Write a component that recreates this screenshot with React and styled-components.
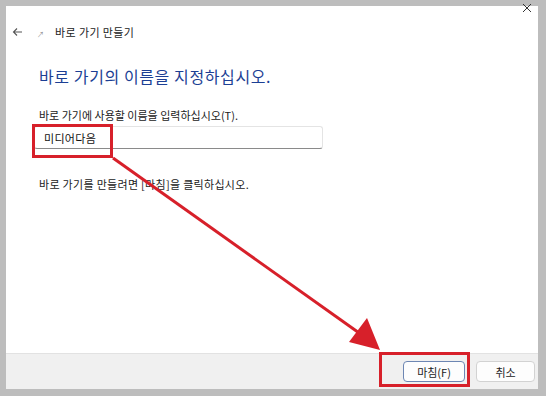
import React from 'react';
import styled, { createGlobalStyle } from 'styled-components';

const GlobalStyle = createGlobalStyle`
  html, body {
    margin: 0;
    padding: 0;
    background: #bdbdbd;
  }
  * {
    box-sizing: border-box;
  }
`;

const KR = `"Noto Sans CJK KR", "Noto Sans", sans-serif`;

// outer gray frame around the captured dialog
const Frame = styled.div`
  position: relative;
  width: 546px;
  height: 396px;
  padding: 6px 8px 7px 6px;
  background: #bdbdbd;
  font-family: ${KR};
`;

const Dialog = styled.div`
  width: 100%;
  height: 100%;
  display: flex;
  flex-direction: column;
  background: #ffffff;
`;

const CloseRow = styled.div`
  height: 10px;
  display: flex;
  justify-content: flex-end;
  padding-right: 6px;
`;

const CloseMark = styled.svg`
  margin-top: -3px;
`;

const NavRow = styled.div`
  height: 32px;
  display: flex;
  align-items: center;
  padding-left: 6px;
`;

const BackArrow = styled.svg`
  margin-right: 14px;
`;

const SmallIcon = styled.span`
  font-size: 7px;
  color: #888;
  width: 12px;
  margin-right: 6px;
  margin-top: 4px;
`;

const WindowTitle = styled.span`
  font-size: 11px;
  letter-spacing: 0.4px;
  color: #222;
`;

const Body = styled.div`
  flex: 1;
  display: flex;
  flex-direction: column;
  padding-left: 33px;
`;

const Heading = styled.h1`
  margin: 18px 0 0 0;
  font-size: 16px;
  letter-spacing: 0.6px;
  font-weight: 400;
  color: #1c3f94;
  line-height: 21px;
`;

const Label = styled.div`
  margin-top: 21px;
  font-size: 11px;
  line-height: 14px;
  color: #222;
`;

const NameInput = styled.div`
  margin-top: 4px;
  margin-left: -5px;
  width: 289px;
  height: 23px;
  display: flex;
  align-items: center;
  padding-left: 9px;
  font-size: 11px;
  letter-spacing: 0.3px;
  color: #111;
  border: 1px solid #e4e4e4;
  border-bottom: 1px solid #8a8a8a;
  border-radius: 3px;
  background: #fff;
`;

const Hint = styled.div`
  margin-top: 28px;
  font-size: 11px;
  letter-spacing: 0.3px;
  line-height: 14px;
  color: #222;
`;

const Footer = styled.div`
  height: 36px;
  display: flex;
  align-items: center;
  justify-content: flex-end;
  gap: 11px;
  padding-right: 3px;
  background: #f0f0f0;
  border-top: 1px solid #e2e2e2;
`;

const Button = styled.div`
  width: ${(p) => p.$w}px;
  height: 21px;
  display: flex;
  align-items: center;
  justify-content: center;
  font-size: 11px;
  color: #222;
  background: #fdfdfd;
  border: 1px solid ${(p) => (p.$primary ? '#6d86b3' : '#d2d2d2')};
  border-radius: 4px;
`;

// red annotation marks lying over the dialog
const Highlight = styled.div`
  position: absolute;
  left: ${(p) => p.$x}px;
  top: ${(p) => p.$y}px;
  width: ${(p) => p.$w}px;
  height: ${(p) => p.$h}px;
  border: 3px solid #d7202a;
`;

const ArrowLayer = styled.svg`
  position: absolute;
  left: 0;
  top: 0;
  pointer-events: none;
`;

const App = () => {
  return (
    <>
      <GlobalStyle />
      <Frame>
        <Dialog>
          <CloseRow>
            <CloseMark width="10" height="10" viewBox="0 0 10 10">
              <path d="M1 1 L9 9 M9 1 L1 9" stroke="#333" strokeWidth="1" />
            </CloseMark>
          </CloseRow>
          <NavRow>
            <BackArrow width="11" height="10" viewBox="0 0 11 10">
              <path d="M10 5 H1.5 M5 1.5 L1.5 5 L5 8.5" stroke="#555" strokeWidth="1.1" fill="none" />
            </BackArrow>
            <SmallIcon>↗</SmallIcon>
            <WindowTitle>바로 가기 만들기</WindowTitle>
          </NavRow>
          <Body>
            <Heading>바로 가기의 이름을 지정하십시오.</Heading>
            <Label>바로 가기에 사용할 이름을 입력하십시오(T).</Label>
            <NameInput>미디어다음</NameInput>
            <Hint>바로 가기를 만들려면 [마침]을 클릭하십시오.</Hint>
          </Body>
          <Footer>
            <Button $w={62} $primary>마침(F)</Button>
            <Button $w={59}>취소</Button>
          </Footer>
        </Dialog>
        <Highlight $x={32} $y={124} $w={81} $h={34} />
        <Highlight $x={379} $y={352} $w={91} $h={35} />
        <ArrowLayer width="546" height="396" viewBox="0 0 546 396">
          <line x1="113" y1="158" x2="362" y2="335" stroke="#d7202a" strokeWidth="3" />
          <polygon points="380,350 349,342 367,318" fill="#d7202a" />
        </ArrowLayer>
      </Frame>
    </>
  );
};

export default App;
